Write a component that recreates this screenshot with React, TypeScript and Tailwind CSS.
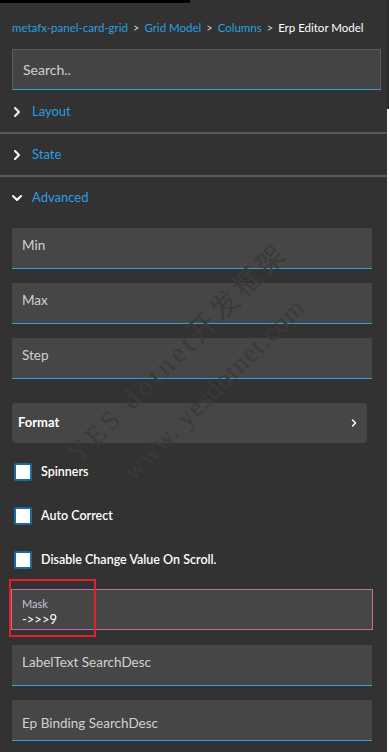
import { ChevronRight, ChevronDown } from "lucide-react";

// breadcrumb trail of the editor panel
const crumbs = ["metafx-panel-card-grid", "Grid Model", "Columns"];

function Field({ label, top = "pt-[9px]" }: { label: string; top?: string }) {
  return (
    <div className={`h-[41px] w-[360px] bg-[#464646] border-b border-[#2ba3e3] pl-[10px] ${top}`}>
      <div className="text-[13.5px] leading-[16px] text-[#d2d2d2]">{label}</div>
    </div>
  );
}

function Check({ label }: { label: string }) {
  return (
    <div className="h-[44px] flex items-center pl-[14px] gap-[9px]">
      <span className="w-[18px] h-[18px] bg-white border-2 border-[#1b6a9e] rounded-[2px]" />
      <span className="text-[12.5px] font-semibold text-white">{label}</span>
    </div>
  );
}

function Section({ title, open = false, h = "h-[41px]" }: { title: string; open?: boolean; h?: string }) {
  return (
    <div className={`${h} flex items-center pl-[9px] gap-[7px]`}>
      {open ? (
        <ChevronDown size={16} strokeWidth={3} className="text-white" />
      ) : (
        <ChevronRight size={16} strokeWidth={3} className="text-white" />
      )}
      <span className="text-[13px] text-[#2b9fe0]">{title}</span>
    </div>
  );
}

export default function App() {
  return (
    <div className="relative w-[389px] h-[752px] overflow-hidden bg-[#323232] font-['Lato',sans-serif] flex">
      <div className="w-[387px] flex flex-col">
        <div className="h-[3px] w-[190px] bg-black" />

        {/* breadcrumb */}
        <div className="h-[46px] pt-[4px] px-3 flex items-center text-[11.5px] whitespace-nowrap">
          {crumbs.map((c) => (
            <span key={c} className="flex items-center shrink-0">
              <span className="text-[#2b9fe0]">{c}</span>
              <span className="text-[#cfcfcf] mx-[5px] text-[11px]">&gt;</span>
            </span>
          ))}
          <span className="text-white shrink-0">Erp Editor Model</span>
        </div>

        {/* search */}
        <div className="ml-3 w-[369px] h-[41px] bg-[#444444] border border-[#5c5c5c] border-b-[#2ba3e3] flex items-center pl-[10px]">
          <span className="text-[14px] text-[#d0d0d0]">Search..</span>
        </div>

        <div className="mt-[2px]">
          <Section title="Layout" h="h-[40px]" />
          <div className="h-[2px] bg-[#5a5a5a]" />
          <Section title="State" />
          <div className="h-[2px] bg-[#5a5a5a]" />
          <Section title="Advanced" open h="h-[42px]" />
        </div>

        <div className="pl-3 mt-[9px] flex flex-col gap-[14px]">
          <Field label="Min" />
          <Field label="Max" />
          <Field label="Step" />
        </div>

        {/* format */}
        <div className="ml-3 mt-[24px] w-[355px] h-[40px] rounded-[4px] bg-[#464646] flex items-center justify-between pl-[6px] pr-[7px]">
          <span className="text-[13px] font-bold text-white">Format</span>
          <ChevronRight size={12} strokeWidth={3} className="text-white" />
        </div>

        <div className="mt-[7px]">
          <Check label="Spinners" />
          <Check label="Auto Correct" />
          <Check label="Disable Change Value On Scroll." />
        </div>

        {/* mask */}
        <div className="ml-[11px] mt-[7px] w-[362px] h-[41px] bg-[#464646] border border-[#c0709c] pl-[10px] pt-[7px] flex flex-col">
          <span className="text-[11px] leading-[13px] text-[#c4c4d8]">Mask</span>
          <span className="text-[13px] leading-[16px] text-white mt-[1px]">-&gt;&gt;&gt;9</span>
        </div>

        <div className="pl-3 mt-[15px] flex flex-col gap-[14px]">
          <Field label="LabelText SearchDesc" />
          <Field label="Ep Binding SearchDesc" top="pt-[15px]" />
        </div>
      </div>

      {/* right edge strip */}
      <div className="w-[2px] flex flex-col">
        <div className="h-[109px] bg-[#2b2b2b]" />
        <div className="flex-1 bg-[#fafafa]" />
      </div>

      {/* watermark */}
      <div className="pointer-events-none absolute left-[178px] top-[353px] -translate-x-1/2 -translate-y-1/2 -rotate-45 whitespace-nowrap font-['Liberation_Serif','Noto_Sans_CJK_SC',serif] text-[28px] tracking-[4px] text-[#3a3a3a]">
        YES dotnet开发框架
      </div>
      <div className="pointer-events-none absolute left-[214px] top-[389px] -translate-x-1/2 -translate-y-1/2 -rotate-45 whitespace-nowrap font-['Liberation_Serif',serif] text-[27px] tracking-[1px] text-[#3a3a3a]">
        www. yesdotnet.com
      </div>

      {/* annotation box */}
      <div className="absolute left-[9px] top-[579px] w-[87px] h-[58px] border-2 border-[#e0202a]" />
    </div>
  );
}
